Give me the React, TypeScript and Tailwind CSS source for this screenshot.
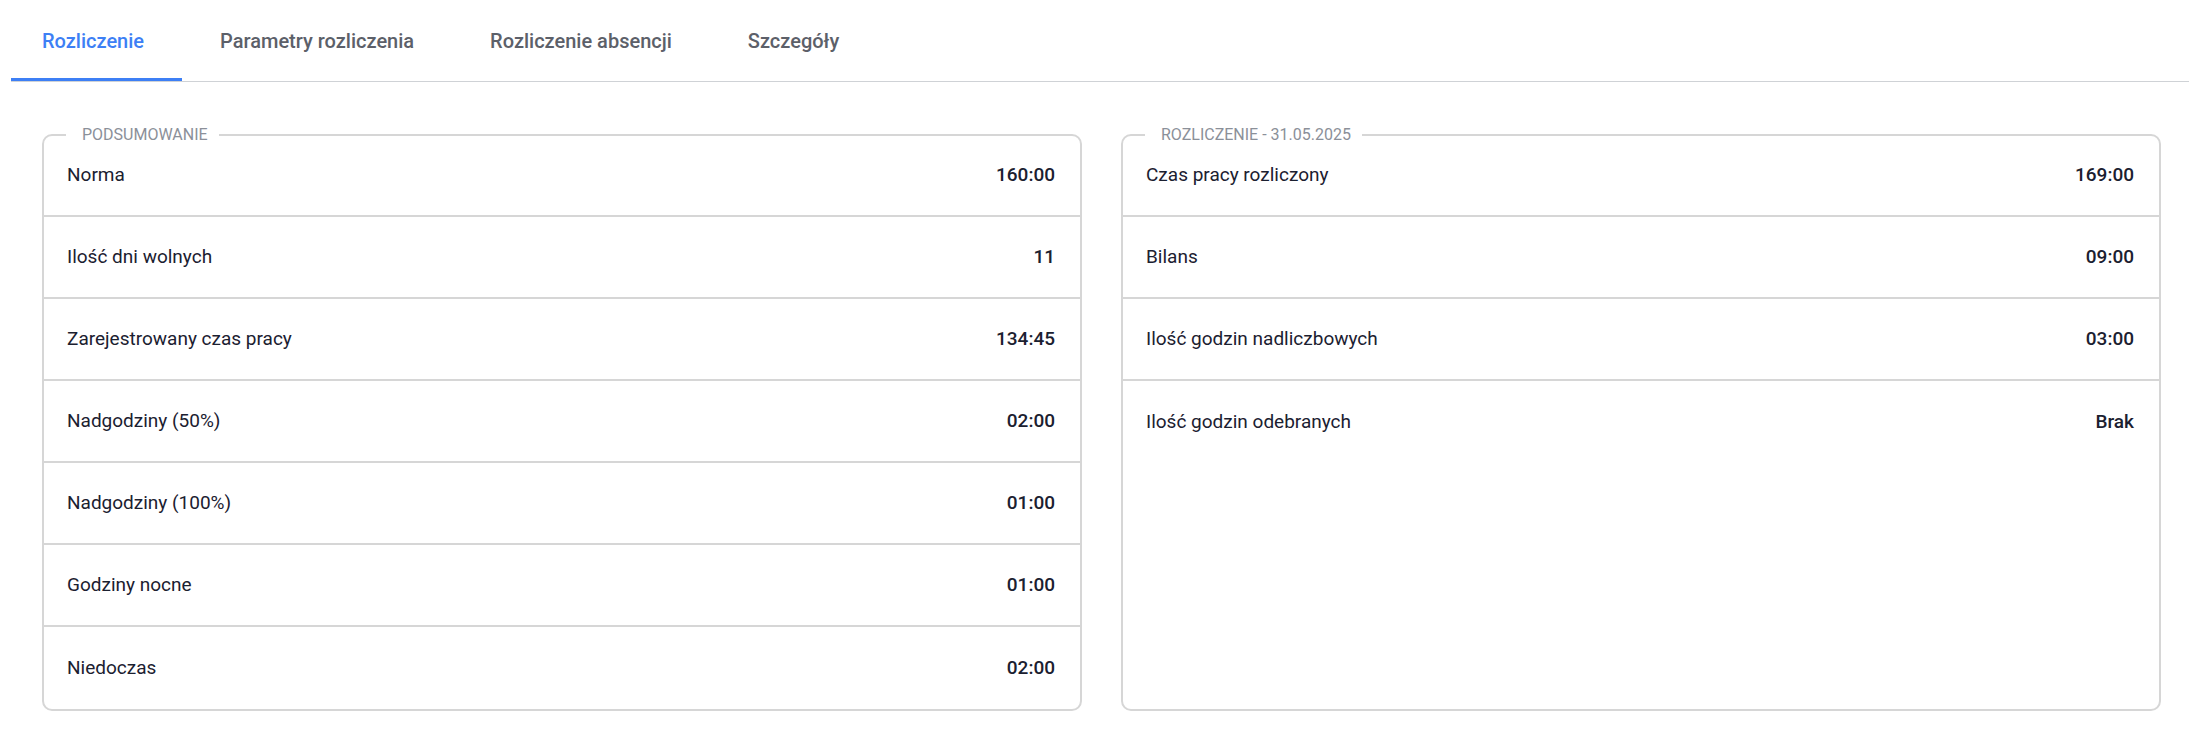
import React from 'react';

type Row = { label: string; value: string };

const tabs = ['Rozliczenie', 'Parametry rozliczenia', 'Rozliczenie absencji', 'Szczegóły'];

const summary: Row[] = [
  { label: 'Norma', value: '160:00' },
  { label: 'Ilość dni wolnych', value: '11' },
  { label: 'Zarejestrowany czas pracy', value: '134:45' },
  { label: 'Nadgodziny (50%)', value: '02:00' },
  { label: 'Nadgodziny (100%)', value: '01:00' },
  { label: 'Godziny nocne', value: '01:00' },
  { label: 'Niedoczas', value: '02:00' },
];

const settlement: Row[] = [
  { label: 'Czas pracy rozliczony', value: '169:00' },
  { label: 'Bilans', value: '09:00' },
  { label: 'Ilość godzin nadliczbowych', value: '03:00' },
  { label: 'Ilość godzin odebranych', value: 'Brak' },
];

function Section({ title, rows }: { title: string; rows: Row[] }) {
  return (
    <fieldset className="border-2 border-[#d6d6d6] rounded-[10px] min-w-0">
      <legend className="ml-[22px] pl-[16px] pr-[11px] text-[16px] leading-[18px] uppercase text-[#8b9099]">
        {title}
      </legend>
      <div className="-mt-[9px]">
        {rows.map((row, i) => (
          <div
            key={row.label}
            className={`flex items-center justify-between h-[82px] pl-[23px] pr-[25px] ${
              i < rows.length - 1 ? 'border-b-2 border-[#d6d6d6]' : ''
            }`}
          >
            <span className="text-[19px] text-[#1b2030]">{row.label}</span>
            <span className="text-[19px] font-medium text-[#1b2030]">{row.value}</span>
          </div>
        ))}
      </div>
    </fieldset>
  );
}

export default function App() {
  return (
    <div className="min-h-screen bg-white font-['Roboto',sans-serif] px-[11px]">
      <div className="flex border-b border-[#cfd2d6]">
        {tabs.map((tab, i) => (
          <button
            key={tab}
            className={`h-[81px] pl-[31px] pr-[38px] mr-[7px] text-[20px] font-medium ${
              i === 0
                ? 'text-[#3d7ff5] border-b-[3px] border-[#3d7ff5] -mb-px pt-[3px]'
                : 'text-[#5c6069]'
            }`}
          >
            {tab}
          </button>
        ))}
      </div>
      <div className="grid grid-cols-2 gap-[39px] pl-[31px] pr-[28px] pt-[44px]">
        <Section title="Podsumowanie" rows={summary} />
        <Section title="Rozliczenie - 31.05.2025" rows={settlement} />
      </div>
    </div>
  );
}
